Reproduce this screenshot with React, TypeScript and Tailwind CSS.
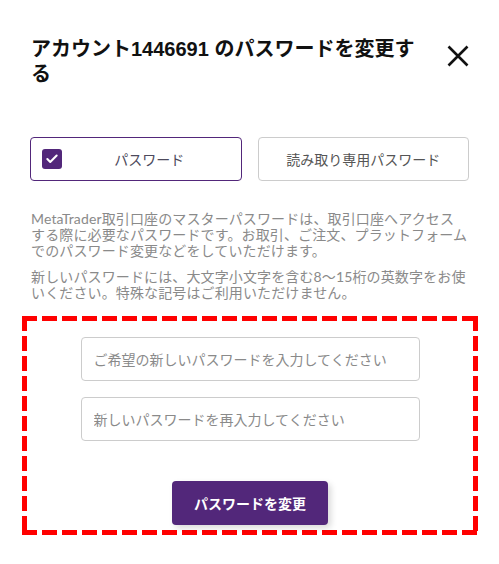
import { Check } from 'lucide-react';

const body = { fontFamily: '"Lato", "Noto Sans CJK JP", sans-serif' };

export default function App() {
  return (
    <div className="min-h-[564px] bg-white px-[30px] pt-[37px] text-[#111]" style={body}>
      {/* Header */}
      <div className="flex items-start justify-between">
        <h1
          className="whitespace-nowrap pl-px text-[20px] font-bold leading-[25px] text-[#111]"
          style={{ fontFamily: '"Liberation Sans", "Noto Sans CJK JP", sans-serif' }}
        >
          アカウント1446691 のパスワードを変更す
          <br />
          る
        </h1>
        <button className="mt-[8px] flex h-[22px] w-[22px] items-center justify-center text-[#111]">
          <svg width="22" height="22" viewBox="0 0 22 22" fill="none">
            <path d="M1.5 1.5L20.5 20.5M20.5 1.5L1.5 20.5" stroke="currentColor" strokeWidth="2.6" />
          </svg>
        </button>
      </div>

      {/* Password type tabs */}
      <div className="mt-[50px] grid grid-cols-2 gap-[16px]">
        <button className="flex h-[44px] items-center rounded-[4px] border border-[#52277a] pl-[11px]">
          <span className="flex h-[20px] w-[20px] shrink-0 items-center justify-center rounded-[3px] bg-[#52277a]">
            <Check size={14} strokeWidth={3.5} className="text-white" />
          </span>
          <span className="flex-1 pr-[4px] text-center text-[14px] text-[#4d4a5c]">パスワード</span>
        </button>
        <button className="flex h-[44px] items-center justify-center rounded-[4px] border border-[#cccccc] text-[14px] text-[#555]">
          読み取り専用パスワード
        </button>
      </div>

      {/* Description */}
      <div className="mt-[30px] pl-px text-[14px] leading-[16px] tracking-[0.13px] text-[#8a8a8a]">
        <p className="whitespace-nowrap">
          MetaTrader取引口座のマスターパスワードは、取引口座へアクセス
          <br />
          する際に必要なパスワードです。お取引、ご注文、プラットフォーム
          <br />
          でのパスワード変更などをしていただけます。
        </p>
        <p className="mt-[10px] whitespace-nowrap">
          新しいパスワードには、大文字小文字を含む8〜15桁の英数字をお使
          <br />
          いください。特殊な記号はご利用いただけません。
        </p>
      </div>

      {/* Form */}
      <div className="-ml-[8px] -mr-[9px] mt-[15px] flex flex-col items-center p-[5px] pt-[21px] pb-[10px] [background:repeating-linear-gradient(90deg,#ff0000_0_15px,transparent_15px_20px)_top_left/100%_5px_no-repeat,repeating-linear-gradient(90deg,#ff0000_0_15px,transparent_15px_20px)_bottom_left/100%_5px_no-repeat,repeating-linear-gradient(180deg,#ff0000_0_15px,transparent_15px_20px)_top_left/5px_100%_no-repeat,repeating-linear-gradient(180deg,#ff0000_0_15px,transparent_15px_20px)_top_right/5px_100%_no-repeat]">
        <input
          className="h-[44px] w-[339px] rounded-[4px] border border-[#cccccc] bg-white px-[12px] text-[14px] text-[#333] outline-none placeholder:text-[#8a8a8a]"
          placeholder="ご希望の新しいパスワードを入力してください"
          type="password"
        />
        <input
          className="mt-[16px] h-[44px] w-[339px] rounded-[4px] border border-[#cccccc] bg-white px-[12px] text-[14px] text-[#333] outline-none placeholder:text-[#8a8a8a]"
          placeholder="新しいパスワードを再入力してください"
          type="password"
        />
        <button className="mt-[40px] h-[44px] w-[156px] rounded-[4px] bg-[#52277a] text-[14px] font-bold text-white shadow-[3px_3px_6px_rgba(0,0,0,0.15)]">
          パスワードを変更
        </button>
      </div>
    </div>
  );
}
